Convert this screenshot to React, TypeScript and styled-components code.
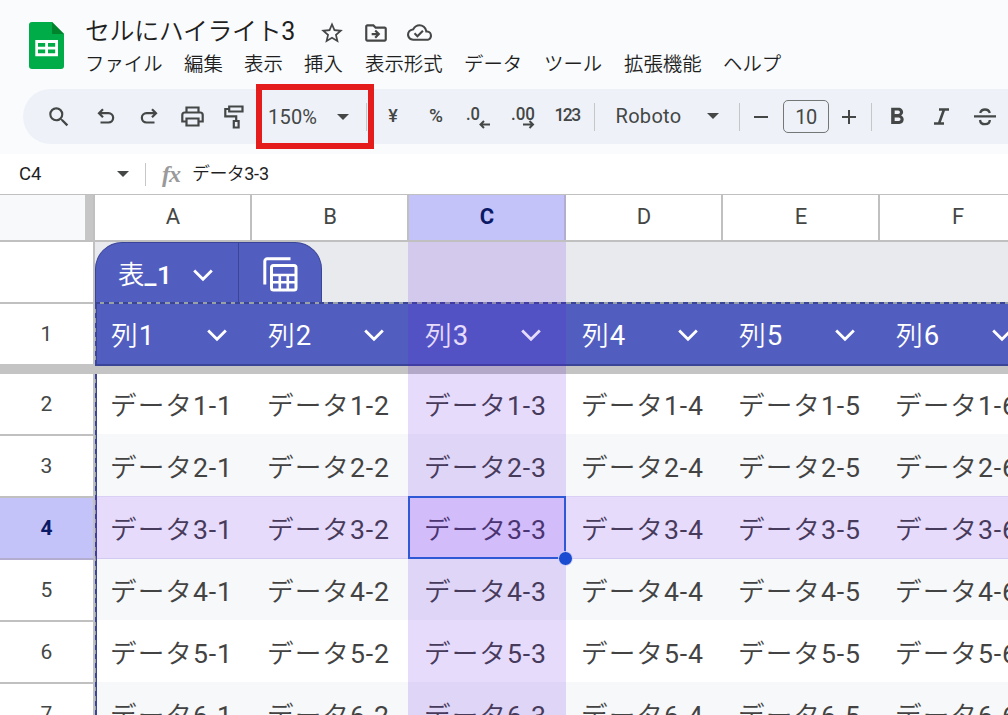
import React from "react";
import styled, { createGlobalStyle } from "styled-components";
import {
  MdSearch,
  MdStarOutline,
  MdOutlineDriveFileMove,
  MdOutlineCloudDone,
  MdFormatBold,
} from "react-icons/md";

const GlobalStyle = createGlobalStyle`
  * { box-sizing: border-box; }
  html, body { margin: 0; padding: 0; overflow: hidden; }
  body { background: #fff; font-family: Roboto, "Noto Sans CJK JP", sans-serif; color: #444746; }
  svg { display: block; }
`;

const Page = styled.div`
  width: 1008px;
  height: 715px;
  overflow: hidden;
  display: flex;
  flex-direction: column;
`;

const Header = styled.header`
  height: 154px;
  flex: none;
  background: #f9fbfd;
  display: flex;
  flex-direction: column;
`;

const Top = styled.div`
  display: flex;
  height: 89px;
  padding-left: 29px;
`;

const Logo = styled.svg`
  width: 35px;
  height: 47px;
  margin-top: 22px;
  flex: none;
`;

const Heading = styled.div`
  margin-left: 21px;
  padding-top: 14px;
`;

const TitleRow = styled.div`
  display: flex;
  align-items: center;
  height: 36px;
  color: #1f1f1f;
`;

const Title = styled.h1`
  margin: 0;
  width: 234px;
  font-size: 25px;
  line-height: 36px;
  font-weight: 350;
  letter-spacing: -0.4px;
  white-space: nowrap;
`;

const TitleIcons = styled.div`
  display: flex;
  align-items: center;
  gap: 18px;
  color: #444746;
  padding-top: 1px;
`;

const Menu = styled.nav`
  display: flex;
  height: 25px;
  align-items: center;
  font-size: 19.4px;
  font-weight: 350;
  color: #1f1f1f;
`;

const MenuItem = styled.span<{ $w: number }>`
  width: ${(p) => p.$w}px;
  flex: none;
  white-space: nowrap;
`;

const Toolbar = styled.div`
  margin-left: 23px;
  height: 55px;
  background: #eef2f8;
  border-radius: 28px 0 0 28px;
  display: flex;
  align-items: center;
  flex: none;
`;

const Slot = styled.div<{ $w: number; $size?: number; $weight?: number; $gap?: number; $lift?: number }>`
  width: ${(p) => p.$w}px;
  height: 55px;
  flex: none;
  display: flex;
  align-items: center;
  justify-content: center;
  padding-bottom: ${(p) => p.$lift ?? 0}px;
  font-size: ${(p) => p.$size ?? 20}px;
  font-weight: ${(p) => p.$weight ?? 400};
  letter-spacing: ${(p) => p.$gap ?? 0}px;
  white-space: nowrap;
`;

const ZoomBox = styled.div`
  width: 118px;
  height: 65px;
  margin-left: -8px;
  flex: none;
  border: 6px solid #e41c1c;
  display: flex;
  align-items: center;
  padding-left: 6px;
  font-size: 20px;
`;

const ZoomValue = styled.span`
  width: 69px;
  letter-spacing: 0.2px;
`;

const Caret = styled.span`
  width: 0;
  height: 0;
  border: 6px solid transparent;
  border-top: 6px solid #444746;
  border-bottom: 0;
  flex: none;
`;

const Rule = styled.span<{ $h?: number; $left?: number }>`
  width: 1px;
  height: ${(p) => p.$h ?? 28}px;
  margin-left: ${(p) => p.$left ?? 0}px;
  background: #c7c7c7;
  flex: none;
`;

const SizeBox = styled.div`
  width: 46px;
  height: 33px;
  margin-left: 1px;
  border: 1.5px solid #747775;
  border-radius: 5px;
  display: flex;
  align-items: center;
  justify-content: center;
  font-size: 20px;
  letter-spacing: -0.5px;
  flex: none;
`;

const FormulaBar = styled.div`
  height: 41px;
  flex: none;
  border-bottom: 1px solid #c0c0c0;
  display: flex;
  align-items: center;
  background: #fff;
  color: #1f1f1f;
  font-size: 18px;
`;

const NameBox = styled.div`
  width: 145px;
  padding: 0 16px 0 19px;
  display: flex;
  justify-content: space-between;
  align-items: center;
`;

const NameText = styled.span`
  font-size: 18.5px;
  margin-top: -1px;
`;

const Fx = styled.span`
  width: 46px;
  padding-left: 16px;
  margin-top: 0;
  font: italic bold 24px "Liberation Serif", serif;
  color: #9a9a9a;
  letter-spacing: -1px;
`;

const Latin = styled.span`
  font-weight: 400;
`;

const FormulaText = styled.span`
  font-weight: 350;
  font-size: 18px;
  letter-spacing: -0.6px;
  margin: -4px 0 0 0;
  ${Latin} { letter-spacing: -0.2px; }
`;

const Sheet = styled.main`
  position: relative;
  flex: 1;
  width: 1100px;
  overflow: hidden;
`;

const ColumnHeads = styled.div`
  display: flex;
  height: 47px;
  border-bottom: 2px solid #c0c0c0;
`;

const Corner = styled.div`
  width: 95px;
  flex: none;
  background: #f8f9fa;
  border-right: 2px solid #c0c0c0;
  display: flex;
  justify-content: flex-end;
  &::after {
    content: "";
    width: 8px;
    background: #c6c6c6;
  }
`;

const ColumnHead = styled.div<{ $active: boolean }>`
  width: 157px;
  flex: none;
  display: flex;
  align-items: center;
  justify-content: center;
  font-size: 22px;
  padding: 0 0 3px 1px;
  border-right: 2px solid ${(p) => (p.$active ? "#b3aed0" : "#c0c0c0")};
  background: ${(p) => (p.$active ? "#c3c3f9" : "#fff")};
  color: ${(p) => (p.$active ? "#0b1a66" : "#444746")};
  font-weight: ${(p) => (p.$active ? 700 : 400)};
`;

const Line = styled.div<{ $h: number }>`
  display: flex;
  height: ${(p) => p.$h}px;
`;

const RowHead = styled.div<{ $active?: boolean; $open?: boolean; $h: number }>`
  width: 95px;
  height: ${(p) => p.$h}px;
  flex: none;
  display: flex;
  align-items: center;
  justify-content: center;
  font-size: 21px;
  padding-bottom: 1px;
  border-right: 2px solid #c0c0c0;
  border-bottom: ${(p) => (p.$open ? 0 : 2)}px solid ${(p) => (p.$active ? "#b3aed0" : "#c0c0c0")};
  background: ${(p) => (p.$active ? "#c3c3f9" : "#fff")};
  color: ${(p) => (p.$active ? "#0b1a66" : "#444746")};
  font-weight: ${(p) => (p.$active ? 700 : 400)};
`;

const TabStrip = styled.div`
  flex: 1;
  background: #e8eaed;
  display: flex;
`;

const Tab = styled.div`
  width: 227px;
  height: 62px;
  background: #525ebf;
  border: 1px solid #3b4597;
  border-bottom: 0;
  border-radius: 27px 27px 0 0;
  display: flex;
  color: #fff;
`;

const TabName = styled.div`
  width: 143px;
  border-right: 1px solid #3b4597;
  padding: 3px 25px 0 22px;
  display: flex;
  align-items: center;
  justify-content: space-between;
  font-size: 26.5px;
  font-weight: 350;
  white-space: nowrap;
  ${Latin} { font-weight: 500; letter-spacing: 0.6px; }
`;

const TabLabel = styled.span`
  margin-top: -6px;
`;

const TabAction = styled.div`
  flex: 1;
  display: flex;
  align-items: center;
  justify-content: center;
  padding-top: 2px;
`;

const FieldRow = styled.div`
  width: 1005px;
  height: 62px;
  flex: none;
  display: flex;
  background: #525ebf;
  border-bottom: 2px solid #3b4597;
  position: relative;
  z-index: 1;
`;

const Field = styled.div`
  width: 157px;
  flex: none;
  padding: 2px 25px 0 16px;
  display: flex;
  align-items: center;
  justify-content: space-between;
  color: #fff;
  font-size: 26.67px;
  font-weight: 350;
  letter-spacing: 1px;
  white-space: nowrap;
  ${Latin} { font-size: 27.5px; }
`;

const FieldLabel = styled.span`
  margin-top: -4px;
`;

const FreezeBar = styled.div`
  height: 10px;
  background: #c4c4c4;
`;

const Body = styled.div`
  display: flex;
`;

const DataRow = styled.div<{ $h: number; $band: boolean }>`
  display: flex;
  height: ${(p) => p.$h}px;
  background: ${(p) => (p.$band ? "#f6f8f9" : "#fff")};
`;

const Cell = styled.div`
  width: 157px;
  flex: none;
  display: flex;
  align-items: flex-end;
  padding: 0 0 8px 15px;
  font-size: 26.67px;
  line-height: 40px;
  font-weight: 350;
  letter-spacing: 1px;
  color: #434343;
  white-space: nowrap;
  ${Latin} { letter-spacing: 0.8px; }
`;

const DashTop = styled.div`
  position: absolute;
  z-index: 1;
  left: 95px;
  right: 0;
  top: 107px;
  height: 2px;
  background: repeating-linear-gradient(90deg, #3b4597 0 5px, #98a0a8 5px 9.33px);
`;

const DashLeft = styled.div<{ $top: number; $h: number }>`
  position: absolute;
  z-index: 1;
  left: 95px;
  top: ${(p) => p.$top}px;
  height: ${(p) => p.$h}px;
  width: 2px;
  background: repeating-linear-gradient(180deg, #3b4597 0 5px, #98a0a8 5px 9.33px);
  border-right: 1px solid #3b4597;
`;

const Highlight = styled.div<{ $x: number; $y: number; $w: number; $h: number }>`
  position: absolute;
  z-index: 2;
  left: ${(p) => p.$x}px;
  top: ${(p) => p.$y}px;
  width: ${(p) => p.$w}px;
  height: ${(p) => p.$h}px;
  background: rgba(91, 15, 235, 0.15);
`;

const RowHighlight = styled(Highlight)`
  border: 1px solid rgba(120, 120, 190, 0.12);
  border-width: 1px 0;
`;

const Selection = styled.div`
  position: absolute;
  z-index: 3;
  left: 408px;
  top: 301px;
  width: 158px;
  height: 63px;
  border: 2px solid #2f58d6;
  &::after {
    content: "";
    position: absolute;
    right: -9px;
    bottom: -9px;
    width: 13px;
    height: 13px;
    border-radius: 50%;
    background: #1a4bd0;
    border: 1px solid #e4dcf8;
  }
`;

const Chevron = () => (
  <svg width="20" height="13" viewBox="0 0 20 13" fill="none" stroke="currentColor" strokeWidth="2.8">
    <path d="M1.200 1.500l8.800 8.800 8.800-8.800" />
  </svg>
);

const TableIcon = () => (
  <svg width="35" height="35" viewBox="0 0 35 35" fill="none" stroke="currentColor" strokeWidth="3">
    <path d="M1.800 27.500V4.300A2.500 2.500 0 0 1 4.300 1.800H27.500" />
    <rect x="8.500" y="8.500" width="24.500" height="24.500" rx="2" />
    <path d="M8.500 18H33M8.500 25.300H33M16.800 18v15M24.800 18v15" strokeWidth="2.600" />
  </svg>
);

const DecimalIcon = ({ digits, right }: { digits: string; right?: boolean }) => (
  <svg width="28" height="28" viewBox="0 0 28 28" fill="none" stroke="currentColor" strokeWidth="2">
    <text x="2" y="17.5" fill="currentColor" stroke="none" fontSize="18" fontWeight="500" textLength={right ? 24 : 14} lengthAdjust="spacingAndGlyphs">
      {digits}
    </text>
    <path d={right ? "M14 22.500h10M20.500 19l3.500 3.500-3.500 3.500" : "M26 22.500h-9.500M20 19l-3.500 3.500 3.500 3.500"} />
  </svg>
);

const Mixed = ({ text }: { text: string }) => {
  const at = text.search(/[0-9_]/);
  return (
    <span>
      {text.slice(0, at)}
      <Latin>{text.slice(at)}</Latin>
    </span>
  );
};

const menu: [string, number][] = [
  ["ファイル", 99],
  ["編集", 60],
  ["表示", 60],
  ["挿入", 61],
  ["表示形式", 99],
  ["データ", 80],
  ["ツール", 80],
  ["拡張機能", 99],
  ["ヘルプ", 70],
];

const columns = ["A", "B", "C", "D", "E", "F"];
const rows = [2, 3, 4, 5, 6, 7];

export default function App() {
  return (
    <Page>
      <GlobalStyle />
      <Header>
        <Top>
          <Logo viewBox="0 0 35 47">
            <path d="M3 0h20l12 12v32a3 3 0 0 1-3 3H3a3 3 0 0 1-3-3V3a3 3 0 0 1 3-3z" fill="#00ac47" />
            <path d="M23 0l12 12H23z" fill="#00832d" />
            <path d="M6.300 18h22.700v16.300H6.300zM9 21v3.700h7.200V21zM19 21v3.700h7.200V21zM9 27.600v3.700h7.200v-3.700zM19 27.600v3.700h7.200v-3.700z" fill="#fff" fillRule="evenodd" />
          </Logo>
          <Heading>
            <TitleRow>
              <Title><Mixed text="セルにハイライト3" /></Title>
              <TitleIcons>
                <MdStarOutline size={26} />
                <MdOutlineDriveFileMove size={26} />
                <MdOutlineCloudDone size={25} />
              </TitleIcons>
            </TitleRow>
            <Menu>
              {menu.map(([label, w]) => (
                <MenuItem key={label} $w={w}>{label}</MenuItem>
              ))}
            </Menu>
          </Heading>
        </Top>
        <Toolbar>
          <Slot $w={72}><MdSearch size={26} /></Slot>
          <Slot $w={22}>
            <svg width="18" height="17" viewBox="0 0 18 17" fill="none" stroke="currentColor" strokeWidth="2.200">
              <path d="M6 1.200L2 5.200l4 4M2 5.200h9.500a4.600 4.600 0 0 1 0 9.300H3.500" />
            </svg>
          </Slot>
          <Slot $w={64}>
            <svg width="18" height="17" viewBox="0 0 18 17" fill="none" stroke="currentColor" strokeWidth="2.200">
              <path d="M12 1.200l4 4-4 4M16 5.200H6.500a4.600 4.600 0 0 0 0 9.300H14.500" />
            </svg>
          </Slot>
          <Slot $w={23}>
            <svg width="23" height="21" viewBox="0 0 23 21" fill="none" stroke="currentColor" strokeWidth="2.200">
              <path d="M5.500 6V1.500h12V6M5.500 15.500H1.300V9a2.500 2.500 0 0 1 2.500-2.500h15.400A2.500 2.500 0 0 1 21.700 9v6.500h-4.200M5.500 12.500h12v7h-12z" />
            </svg>
          </Slot>
          <Slot $w={60}>
            <svg width="20" height="24" viewBox="0 0 20 24" fill="none" stroke="currentColor" strokeWidth="2.200">
              <path d="M5.200 1.500H18.500v5H5.200zM5.200 4H1.300v7.300H12.200V16M9.800 16h4.800v6.500H9.800z" />
            </svg>
          </Slot>
          <ZoomBox>
            <ZoomValue>150%</ZoomValue>
            <Caret />
            <Rule $left={17} />
          </ZoomBox>
          <Slot $w={38} $size={18} $weight={500} $lift={2}>¥</Slot>
          <Slot $w={48} $size={19} $weight={500} $lift={2}>%</Slot>
          <Slot $w={36} $lift={2}><DecimalIcon digits=".0" /></Slot>
          <Slot $w={54} $lift={2}><DecimalIcon digits=".00" right /></Slot>
          <Slot $w={34} $size={17.5} $weight={500} $gap={-1.6} $lift={3}>123</Slot>
          <Rule $left={10} />
          <Slot $w={107} $size={20} $gap={0.3} $lift={2}>Roboto</Slot>
          <Slot $w={22} $lift={2}><Caret /></Slot>
          <Rule $left={15} />
          <Slot $w={42}>
            <svg width="14" height="2" viewBox="0 0 14 2"><path d="M0 0h14v2H0z" fill="currentColor" /></svg>
          </Slot>
          <SizeBox>10</SizeBox>
          <Slot $w={39}>
            <svg width="14" height="14" viewBox="0 0 14 14"><path d="M0 6h6V0h2v6h6v2H8v6H6V8H0z" fill="currentColor" /></svg>
          </Slot>
          <Rule $left={3} />
          <Slot $w={50}><MdFormatBold size={28} /></Slot>
          <Slot $w={38}>
            <svg width="15" height="17" viewBox="0 0 15 17" fill="none" stroke="currentColor" strokeWidth="2.600">
              <path d="M5 1.500h10M0 15.500h10M10 1.500L5 15.500" />
            </svg>
          </Slot>
          <Slot $w={50}>
            <svg width="22" height="18" viewBox="0 0 22 18" fill="none" stroke="currentColor" strokeWidth="2.300">
              <path d="M0 8.300h22M6.200 5C6.800 2.800 8.500 1.500 11 1.500S15.200 2.800 15.800 5M6 12c.3 2.600 2.200 4.200 5 4.200s4.800-1.400 4.800-4.200" />
            </svg>
          </Slot>
        </Toolbar>
      </Header>
      <FormulaBar>
        <NameBox><NameText>C4</NameText><Caret /></NameBox>
        <Rule $h={23} />
        <Fx>fx</Fx>
        <FormulaText><Mixed text="データ3-3" /></FormulaText>
      </FormulaBar>
      <Sheet>
        <ColumnHeads>
          <Corner />
          {columns.map((c) => <ColumnHead key={c} $active={c === "C"}>{c}</ColumnHead>)}
        </ColumnHeads>
        <Line $h={62}>
          <RowHead $h={62} />
          <TabStrip>
            <Tab>
              <TabName>
                <TabLabel><Mixed text="表_1" /></TabLabel>
                <Chevron />
              </TabName>
              <TabAction><TableIcon /></TabAction>
            </Tab>
          </TabStrip>
        </Line>
        <Line $h={60}>
          <RowHead $h={60} $open>1</RowHead>
          <FieldRow>
            {columns.map((c, i) => (
              <Field key={c}>
                <FieldLabel><Mixed text={`列${i + 1}`} /></FieldLabel>
                <Chevron />
              </Field>
            ))}
          </FieldRow>
        </Line>
        <FreezeBar />
        <Body>
          <div>
            {rows.map((n) => <RowHead key={n} $h={62} $active={n === 4}>{n}</RowHead>)}
          </div>
          <div>
            {rows.map((n, r) => (
              <DataRow key={n} $h={r === 0 ? 60 : 62} $band={r % 2 === 1}>
                {columns.map((c, i) => (
                  <Cell key={c}><Mixed text={`データ${r + 1}-${i + 1}`} /></Cell>
                ))}
              </DataRow>
            ))}
          </div>
        </Body>
        <DashTop />
        <DashLeft $top={109} $h={60} />
        <DashLeft $top={179} $h={341} />
        <Highlight $x={408} $y={47} $w={158} $h={473} />
        <RowHighlight $x={95} $y={301} $w={1005} $h={63} />
        <Selection />
      </Sheet>
    </Page>
  );
}
